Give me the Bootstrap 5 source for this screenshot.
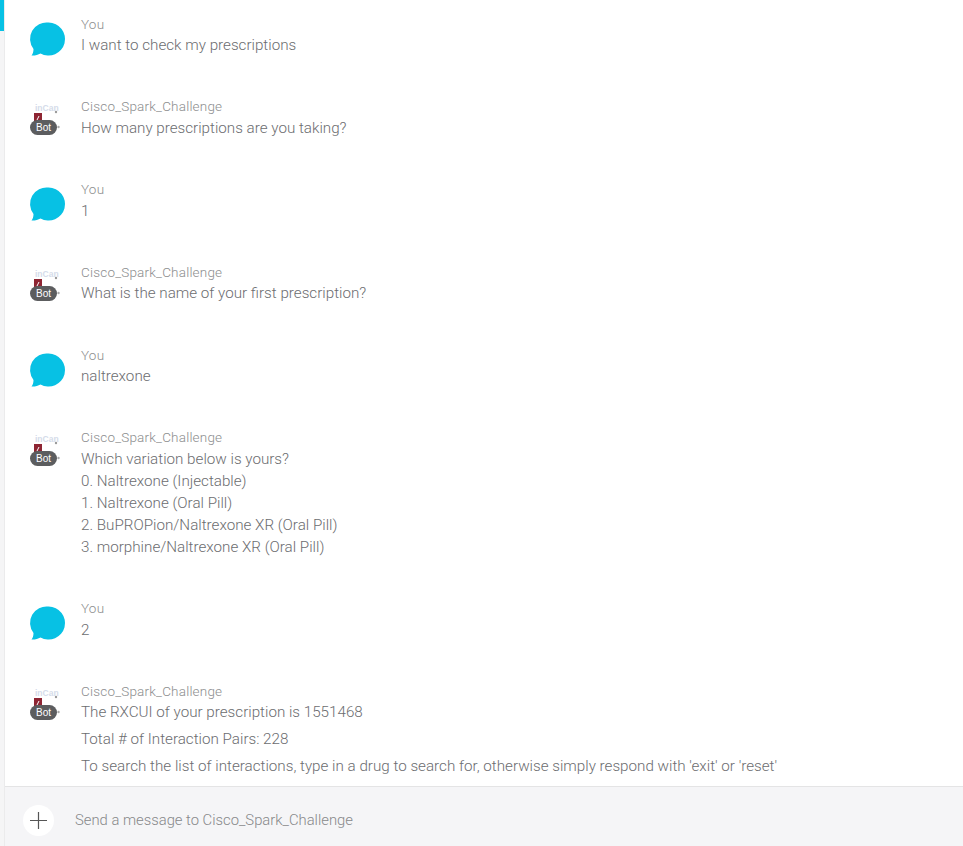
<!DOCTYPE html>
<html lang="en">
<head>
  <meta charset="UTF-8" />
  <title>Cisco Spark</title>
  <link href="https://cdn.jsdelivr.net/npm/bootstrap@5.3.4/dist/css/bootstrap.min.css" rel="stylesheet"/>
  <style>
    html, body { height: 100%; }
    body {
      background-color: #fff;
      color: #6c6d70;
      font-family: "Roboto", "Liberation Sans", sans-serif;
      font-weight: 300;
      font-size: 15.2px;
      overflow: hidden;
    }
    .app-shell { height: 846px; }
    .side-rail { width: 5px; background-color: #f5f5f6; border-right: 1px solid #ebebec; }
    .side-mark { height: 31px; background-color: #07c1e4; }
    .thread { height: 786px; padding: 14.6px 0 0 26px; overflow: hidden; }
    .msg-row { margin-bottom: 41.25px; }
    .avatar-box { width: 34px; height: 33px; margin-right: 16px; margin-top: 7px; position: relative; flex-shrink: 0; }
    .avatar-box svg { display: block; overflow: visible; }
    .logo-word {
      position: absolute; left: 4px; top: -1px; color: #d5dcea;
      font: 700 8.5px/10px "Liberation Sans", sans-serif;
    }
    .bot-pill {
      position: absolute; left: -1px; top: 16px; width: 27px; height: 15px;
      background-color: #5c5d5f; color: #fff; border-radius: 8px;
      font: 400 10px/15px "Liberation Sans", sans-serif; text-align: center;
    }
    .sender { font-size: 13.5px; letter-spacing: .2px; line-height: 19.5px; color: #8c8d8e; }
    .line-text { line-height: 22px; }
    .para-text { line-height: 22px; margin-bottom: 5px; }
    .composer { height: 60px; background-color: #f5f5f7; border-top: 1px solid #e4e4e5; padding: 8px 0 0 18px; }
    .add-btn { width: 31px; height: 31px; border-radius: 50%; background-color: #fff; margin-right: 21px; }
    .hint-text { color: #87888a; font-size: 14.8px; }
  </style>
</head>
<body>
  <div class="app-shell d-flex">
    <div class="side-rail flex-shrink-0"><div class="side-mark"></div></div>
    <div class="flex-grow-1 d-flex flex-column">
      <div class="thread" id="thread"></div>
      <div class="composer d-flex align-items-center">
        <div class="add-btn d-flex align-items-center justify-content-center">
          <svg width="17" height="17" viewBox="0 0 17 17"><path d="M8.5 0v17M0 8.5h17" stroke="#555" stroke-width="1.2" fill="none"/></svg>
        </div>
        <span class="hint-text">Send a message to Cisco_Spark_Challenge</span>
      </div>
    </div>
  </div>

  <template id="youIcon">
    <svg width="34" height="34" viewBox="0 0 34 34"><path d="M17.500 0.500a16.500 16.500 0 1 1-8 30.900C7 32.800 4 33.700 0.500 33.500c1.300-1.500 2-3.800 2-6.500A16.500 16.500 0 0 1 17.500 0.500z" fill="#07c1e4"/></svg>
  </template>
  <template id="botIcon">
    <div class="logo-word">inCan</div>
    <svg width="34" height="34" viewBox="0 0 34 34">
      <rect x="3" y="9" width="8" height="8" fill="#8e2533"/>
      <path d="M6 16l2-4" stroke="#fff" stroke-width="1"/>
      <circle cx="25" cy="8" r="1.200" fill="#9a9a9a"/>
      <circle cx="27.500" cy="23" r="1.200" fill="#aaa"/>
    </svg>
    <div class="bot-pill">Bot</div>
  </template>

  <script src="https://cdn.jsdelivr.net/npm/bootstrap@5.3.4/dist/js/bootstrap.bundle.min.js"></script>
  <script>
    const you = "You", bot = "Cisco_Spark_Challenge";
    const messages = [
      [you, ["I want to check my prescriptions"]],
      [bot, ["How many prescriptions are you taking?"]],
      [you, ["1"]],
      [bot, ["What is the name of your first prescription?"]],
      [you, ["naltrexone"]],
      [bot, ["Which variation below is yours?", "0. Naltrexone (Injectable)", "1. Naltrexone (Oral Pill)", "2. BuPROPion/Naltrexone XR (Oral Pill)", "3. morphine/Naltrexone XR (Oral Pill)"]],
      [you, ["2"]],
      [bot, ["The RXCUI of your prescription is 1551468", "Total # of Interaction Pairs: 228", "To search the list of interactions, type in a drug to search for, otherwise simply respond with 'exit' or 'reset'"], true]
    ];
    const thread = document.getElementById("thread");
    messages.forEach(([who, lines, paras]) => {
      const row = document.createElement("div");
      row.className = "msg-row d-flex";
      const icon = document.createElement("div");
      icon.className = "avatar-box";
      icon.appendChild(document.getElementById(who === you ? "youIcon" : "botIcon").content.cloneNode(true));
      const body = document.createElement("div");
      const name = document.createElement("div");
      name.className = "sender";
      name.textContent = who;
      body.appendChild(name);
      lines.forEach(t => {
        const line = document.createElement("div");
        line.className = paras ? "para-text" : "line-text";
        line.textContent = t;
        body.appendChild(line);
      });
      row.appendChild(icon);
      row.appendChild(body);
      thread.appendChild(row);
    });
  </script>
</body>
</html>
